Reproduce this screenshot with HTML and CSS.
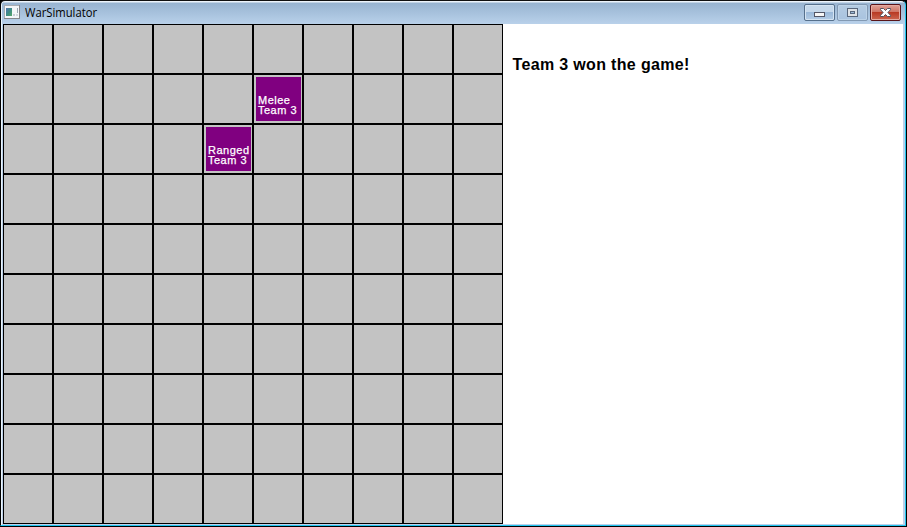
FILE: index.html
```
<!DOCTYPE html>
<html lang="en">
<head>
<meta charset="utf-8">
<title>WarSimulator</title>
<link rel="stylesheet" href="styles.css">
</head>
<body>
<div class="window">
  <header class="titlebar">
    <svg class="app-icon" width="16" height="14" viewBox="0 0 16 14" shape-rendering="crispEdges">
      <rect width="16" height="14" fill="#85868b"/>
      <rect width="15" height="13" fill="#a9adb3"/>
      <rect x="1" y="1" width="14" height="12" fill="#f4f6f8"/>
      <rect x="2" y="3" width="6" height="8" fill="url(#app)"/>
      <rect x="9" y="9" width="2" height="2" fill="#c7ccd5"/>
      <rect x="13" y="3" width="1" height="5" fill="#9ba8b2"/>
      <rect x="12" y="9" width="2" height="2" fill="#d4d7df"/>
      <defs><linearGradient id="app" x2="1" y2="1"><stop stop-color="#5275ae"/><stop offset=".5" stop-color="#3f8c87"/><stop offset="1" stop-color="#57a768"/></linearGradient></defs>
    </svg>
    <svg class="title" width="80" height="20" role="img"><text x="0" y="14" textLength="72" lengthAdjust="spacingAndGlyphs">WarSimulator</text></svg>
    <div class="controls">
      <span class="btn">
        <svg width="11" height="5" shape-rendering="crispEdges"><rect x=".5" y=".5" width="10" height="4" rx="1" fill="#f7f7f7" stroke="#535666"/></svg>
      </span>
      <span class="btn btn-disabled">
        <svg width="11" height="9" shape-rendering="crispEdges"><path d="M.5.5h10v8H.5z" fill="#dfe3e7" stroke="#59677c"/><path d="M3.5 3.5h4v2h-4z" fill="#9dbad8" stroke="#59677c"/></svg>
      </span>
      <span class="btn btn-close">
        <svg width="13" height="11" viewBox="0 0 13 11"><path d="M1.5 1.5h3l2 2 2-2h3v1.2L8.9 5.5l2.6 2.8v1.2h-3l-2-2-2 2h-3V8.300l2.6-2.800-2.6-2.800z" fill="#fff" stroke="#53535f"/></svg>
      </span>
    </div>
  </header>
  <main class="client">
    <div class="board" id="board"></div>
    <p class="status">Team 3 won the game!</p>
  </main>
</div>
<script src="board.js"></script>
</body>
</html>
```
FILE: styles.css
```
* { box-sizing: border-box; }
body {
  margin: 0;
  width: 907px;
  height: 527px;
  overflow: hidden;
  background: #000;
  font-family: "Liberation Sans", Arial, sans-serif;
}
.window {
  width: 906px;
  height: 526px;
  padding: 0 1px 1px 2px;
  border: 1px solid;
  border-color: #111 #20c5ef #20c5ef #000;
  border-radius: 5px 5px 0 0;
  background: linear-gradient(#edf4fb 0 1px, #98b4d1 2px, #bad2eb 24px, #bdd1ea);
  box-shadow: inset 1px 0 #eaf5fd;
}
.titlebar {
  display: flex;
  height: 23px;
  padding-left: 1px;
}
.app-icon { margin-top: 4px; }
.title {
  margin: 2px 0 0 5px;
  font: 12px "Open Sans", "Noto Sans", sans-serif;
}
.controls {
  display: flex;
  gap: 2px;
  margin: 3px 3px 0 auto;
}
.btn {
  display: flex;
  align-items: center;
  justify-content: center;
  width: 31px;
  height: 17px;
  border: 1px solid #56708c;
  border-radius: 2px;
  background: linear-gradient(#c5d8eb 0 46%, #9bb9d9 50%, #b5cde6);
  box-shadow: inset 0 0 0 1px #d5e4f2;
}
.btn:first-child svg { margin-top: 4px; }
.btn-disabled {
  border-color: #8299b3;
  background: linear-gradient(#b4cbe2, #a9c3df);
  box-shadow: inset 0 0 0 1px #bdd3e8;
}
.btn-close {
  border-color: #581419;
  background: linear-gradient(#e0a197 0, #cf7464 46%, #b93a24 50%, #cc6650);
  box-shadow: inset 0 0 0 1px #e5aaa0;
}
.client {
  display: flex;
  width: 900px;
  height: 500px;
  background: #fff;
}
.board {
  display: grid;
  grid-template-columns: repeat(10, 50px);
  grid-template-rows: repeat(10, 50px);
}
.cell {
  padding: 2px;
  border: 1px solid #000;
  background: #c3c3c3;
}
.unit {
  width: 45px;
  height: 44px;
  padding: 18px 0 0 2px;
  background: #800080;
  color: #fff;
  font-size: 11px;
  line-height: 10px;
  letter-spacing: .5px;
  white-space: nowrap;
  -webkit-text-stroke: .25px #fff;
}
.status {
  margin: 32px 0 0 9.500px;
  font-size: 16px;
  font-weight: bold;
  line-height: 18px;
  letter-spacing: .34px;
}
```
FILE: board.js
```
const units = { "1,5": "Melee", "2,4": "Ranged" };
const board = document.getElementById("board");
for (let row = 0; row < 10; row++) {
  for (let col = 0; col < 10; col++) {
    const cell = document.createElement("div");
    cell.className = "cell";
    const name = units[`${row},${col}`];
    if (name) cell.innerHTML = `<div class="unit">${name}<br>Team 3</div>`;
    board.append(cell);
  }
}
```
